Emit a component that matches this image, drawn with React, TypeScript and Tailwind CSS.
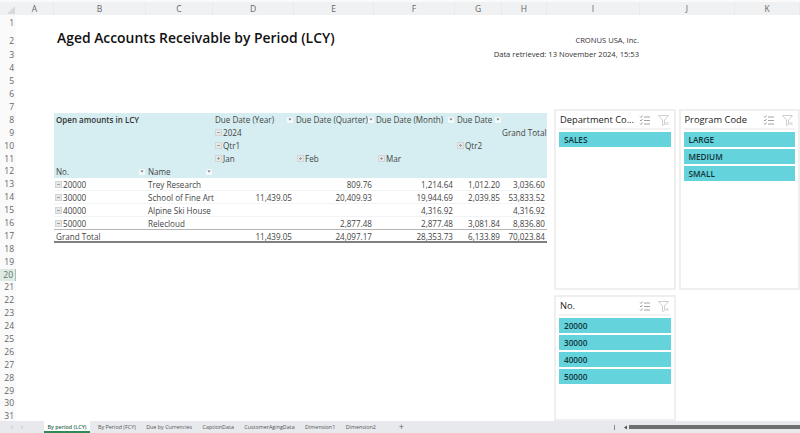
const COLS = ["A", "B", "C", "D", "E", "F", "G", "H", "I", "J", "K"];
const COL_W = [38, 92, 67, 81, 80, 81, 47, 45, 93, 95, 65];
const ROWS = Array.from({ length: 31 }, (_, i) => i + 1);

const GRID = "grid grid-cols-[92px_67px_81px_80px_81px_47px_45px] auto-rows-[13px]";

const DATA = [
  { no: "20000", name: "Trey Research", v: ["", "809.76", "1,214.64", "1,012.20", "3,036.60"] },
  { no: "30000", name: "School of Fine Art", v: ["11,439.05", "20,409.93", "19,944.69", "2,039.85", "53,833.52"] },
  { no: "40000", name: "Alpine Ski House", v: ["", "", "4,316.92", "", "4,316.92"] },
  { no: "50000", name: "Relecloud", v: ["", "2,877.48", "2,877.48", "3,081.84", "8,836.80"] },
];
const TOTALS = ["11,439.05", "24,097.17", "28,353.73", "6,133.89", "70,023.84"];
const TABS = ["By Period (FCY)", "Due by Currencies", "CaptionData", "CustomerAgingData", "Dimension1", "Dimension2"];

function Drop() {
  return (
    <span className="flex h-[6px] w-[6px] shrink-0 items-center justify-center rounded-[1px] bg-[#f4fafb]">
      <svg width="4" height="3" viewBox="0 0 4 3">
        <path d="M0.3 0.5h3.4L2 2.6z" fill="#777" />
      </svg>
    </span>
  );
}

function Box({ plus }: { plus?: boolean }) {
  return (
    <svg width="7" height="7" viewBox="0 0 7 7" className="mr-px shrink-0">
      <rect x="0.5" y="0.5" width="6" height="6" fill="#e6e8ea" stroke="#d2d5d8" />
      <path d={plus ? "M2 3.5h3M3.5 2v3" : "M2 3.5h3"} stroke="#a0a0a0" />
    </svg>
  );
}

function Head({ text, drop }: { text?: string; drop?: boolean }) {
  return (
    <div className="flex items-center justify-between pl-[2px] pr-[1px]">
      <span className="whitespace-nowrap">{text}</span>
      {drop && <Drop />}
    </div>
  );
}

function Tree({ text, plus, className }: { text: string; plus?: boolean; className?: string }) {
  return (
    <div className={`flex items-center ${className ?? "pl-[2px]"}`}>
      <Box plus={plus} />
      {text}
    </div>
  );
}

function PivotTable() {
  return (
    <div className="ml-[38px] w-[493px] text-[8.1px] leading-[13px] text-[#444]">
      <div className={`${GRID} bg-[#d6eef1]`}>
        <div className="col-span-2 pl-[2px] text-[8px] font-semibold whitespace-nowrap text-[#333]">
          Open amounts in LCY
        </div>
        <Head text="Due Date (Year)" drop />
        <Head text="Due Date (Quarter)" drop />
        <Head text="Due Date (Month)" drop />
        <Head text="Due Date" drop />
        <div />

        <div className="col-span-2" />
        <Tree text="2024" />
        <div className="col-span-3" />
        <div className="pr-[2px] text-right whitespace-nowrap">Grand Total</div>

        <div className="col-span-2" />
        <Tree text="Qtr1" />
        <div className="col-span-2" />
        <Tree text="Qtr2" plus />
        <div />

        <div className="col-span-2" />
        <Tree text="Jan" plus />
        <Tree text="Feb" plus className="pl-[3px]" />
        <Tree text="Mar" plus className="pl-[4px]" />
        <div className="col-span-2" />

        <div className="flex items-center justify-between pl-[2px] pr-[1px]">
          No.
          <Drop />
        </div>
        <div className="flex items-center justify-between pl-[2px] pr-[1px]">
          Name
          <Drop />
        </div>
        <div className="col-span-5" />
      </div>

      {DATA.map((row) => (
        <div key={row.no} className={`${GRID} h-[13px] border-b border-[#f1f4f5]`}>
          <Tree text={row.no} className="pl-[1px]" />
          <div className="pl-[2px] whitespace-nowrap">{row.name}</div>
          {row.v.map((val, i) => (
            <div key={i} className="pr-[2px] text-right">
              {val}
            </div>
          ))}
        </div>
      ))}

      <div className={`${GRID} -mt-[1px] h-[14px] border-t border-b-[2px] border-t-[#b5b5b5] border-b-[#7f7f7f]`}>
        <div className="col-span-2 pl-[2px]">Grand Total</div>
        {TOTALS.map((val) => (
          <div key={val} className="pr-[2px] text-right">
            {val}
          </div>
        ))}
      </div>
    </div>
  );
}

function MultiIcon() {
  return (
    <svg width="11" height="10" viewBox="0 0 11 10" fill="none" stroke="#8a8a8a" strokeWidth="0.8">
      <path d="M1 1.5l1 1 1.5-2M1 5l1 1 1.5-2M1 8.5l1 1 1.5-2" />
      <path d="M5 2h6M5 5.5h6M5 9h6" />
    </svg>
  );
}

function FilterIcon() {
  return (
    <svg width="11" height="11" viewBox="0 0 11 11" fill="none" stroke="#c9c9c9" strokeWidth="0.9">
      <path d="M0.5 0.5h10L6.5 5v4.5l-2 1V5z" />
      <path d="M7.5 7l3 3M10.5 7l-3 3" />
    </svg>
  );
}

function Slicer({ title, items, className }: { title: string; items: string[]; className: string }) {
  return (
    <div className={`flex flex-col border-2 border-[#efefef] bg-white px-[3px] ${className}`}>
      <div className="flex h-[19px] items-center border-b-2 border-[#f2f2f2] pl-[1px] pr-[2px] pt-[1px]">
        <span className="flex-1 whitespace-nowrap text-[9.3px] text-[#222]">{title}</span>
        <span className="mr-[8px] flex">
          <MultiIcon />
        </span>
        <FilterIcon />
      </div>
      <div className="mt-[2px] flex flex-col gap-[2px]">
        {items.map((item) => (
          <div
            key={item}
            className="h-[15px] bg-[#64d3dc] pl-[5px] text-[8.2px] font-semibold leading-[15px] text-[#12343a]"
          >
            {item}
          </div>
        ))}
      </div>
    </div>
  );
}

export default function App() {
  return (
    <div className="flex h-[433px] w-[800px] flex-col overflow-hidden bg-white font-['Open_Sans',sans-serif]">
      {/* column letters */}
      <div className="flex h-[15px] shrink-0 border-t-2 border-[#fafafa] bg-[#f0f1f3] text-[8.5px] leading-[13px] text-[#666]">
        <div className="flex w-[16px] shrink-0 items-end justify-end pb-[1px] pr-[1px]">
          <svg width="8" height="8" viewBox="0 0 8 8">
            <path d="M8 0v8H0z" fill="#d9dadc" />
          </svg>
        </div>
        {COLS.map((c, i) => (
          <div key={c} className="shrink-0 border-r border-[#e9eaec] text-center" style={{ width: COL_W[i] }}>
            {c}
          </div>
        ))}
      </div>

      <div className="flex min-h-0 flex-1">
        {/* row numbers */}
        <div className="w-[16px] shrink-0 overflow-hidden bg-[#fafafa] pt-[2px] text-right text-[8.5px] text-[#666]">
          {ROWS.map((r) => (
            <div
              key={r}
              className={`pr-[2px] ${r === 2 ? "h-[19.5px] leading-[21px]" : "h-[12.9px] leading-[12.9px]"} ${
                r === 20 ? "border-r border-[#a9c2b3] bg-[#dfe9e3] text-[#4f7a63]" : ""
              }`}
            >
              {r}
            </div>
          ))}
        </div>

        {/* sheet */}
        <div className="flex min-w-0 flex-1">
          <div className="w-[538px] shrink-0">
            <div className="h-[98px]">
              <h1 className="ml-[41px] pt-[13px] whitespace-nowrap text-[13.9px] font-semibold leading-[20px] text-[#111]">
                Aged Accounts Receivable by Period (LCY)
              </h1>
            </div>
            <PivotTable />
          </div>

          <div className="relative min-w-0 flex-1">
            <div className="absolute right-[161px] top-[19px] w-[200px] text-right text-[7.6px] leading-[13.5px] text-[#333]">
              <div>CRONUS USA, Inc.</div>
              <div className="whitespace-nowrap">Data retrieved: 13 November 2024, 15:53</div>
            </div>
            <div className="mt-[94px] flex gap-[3px]">
              <Slicer title="Department Co..." items={["SALES"]} className="h-[181px] w-[122px]" />
              <Slicer title="Program Code" items={["LARGE", "MEDIUM", "SMALL"]} className="h-[181px] w-[122px]" />
            </div>
            <Slicer title="No." items={["20000", "30000", "40000", "50000"]} className="mt-[5px] h-[126px] w-[122px]" />
          </div>
        </div>
      </div>

      {/* sheet tabs */}
      <div className="flex h-[12px] shrink-0 items-center bg-[#e7e9ed] text-[5.4px] leading-[12px] text-[#555]">
        <div className="flex w-[44px] gap-[8px] pl-[11px] text-[7px] text-[#aaa]">
          <span>‹</span>
          <span>›</span>
        </div>
        <div className="h-[12px] w-[46px] border-b-2 border-[#2e8b57] bg-white text-center font-semibold text-[#2f6b4b] whitespace-nowrap">
          By period (LCY)
        </div>
        <div className="ml-[8px] flex gap-[10.4px] whitespace-nowrap">
          {TABS.map((t) => (
            <span key={t}>{t}</span>
          ))}
        </div>
        <span className="ml-[23px] text-[9px] text-[#666]">+</span>
        <div className="ml-auto flex w-[186px] items-center">
          <span className="h-[5px] w-px bg-[#888]" />
          <svg width="5" height="5" viewBox="0 0 5 5" className="ml-[8px]">
            <path d="M4 0.5v4L1 2.5z" fill="#555" />
          </svg>
          <div className="ml-[1px] h-[4px] flex-1 bg-[#6f6f6f]" />
        </div>
      </div>
    </div>
  );
}
